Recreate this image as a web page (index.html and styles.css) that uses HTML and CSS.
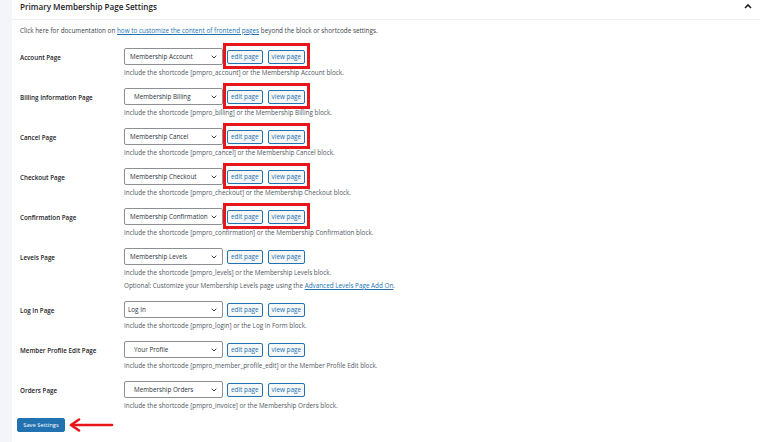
FILE: index.html
```html
<!DOCTYPE html>
<html lang="en">
<head>
<meta charset="utf-8">
<title>Primary Membership Page Settings</title>
<link rel="stylesheet" href="styles.css">
</head>
<body>
<div class="page">
  <div class="panel">
    <div class="panel-head">
      <h2 class="panel-title">Primary Membership Page Settings</h2>
      <svg class="toggle" width="8" height="6" viewBox="0 0 8 6"><polyline points="1,5 4,2 7,5" fill="none" stroke="#1d2327" stroke-width="1.6"/></svg>
    </div>
    <div class="panel-body">
      <p class="intro">Click here for documentation on <a href="#">how to customize the content of frontend pages</a> beyond the block or shortcode settings.</p>
      <div class="rows">
        <div class="row">
          <div class="label">Account Page</div>
          <div class="field">
            <div class="controls">
              <span class="select"><span class="select-value">Membership Account</span><svg class="caret" width="6" height="4" viewBox="0 0 6 4"><polyline points="0.7,0.7 3,3 5.3,0.7" fill="none" stroke="#3c434a" stroke-width="1"/></svg></span>
              <span class="btns hl"><a class="btn" href="#">edit page</a><a class="btn" href="#">view page</a></span>
            </div>
            <p class="desc">Include the shortcode [pmpro_account] or the Membership Account block.</p>
          </div>
        </div>
        <div class="row">
          <div class="label">Billing Information Page</div>
          <div class="field">
            <div class="controls">
              <span class="select"><span class="select-value indent">Membership Billing</span><svg class="caret" width="6" height="4" viewBox="0 0 6 4"><polyline points="0.7,0.7 3,3 5.3,0.7" fill="none" stroke="#3c434a" stroke-width="1"/></svg></span>
              <span class="btns hl"><a class="btn" href="#">edit page</a><a class="btn" href="#">view page</a></span>
            </div>
            <p class="desc">Include the shortcode [pmpro_billing] or the Membership Billing block.</p>
          </div>
        </div>
        <div class="row">
          <div class="label">Cancel Page</div>
          <div class="field">
            <div class="controls">
              <span class="select"><span class="select-value">Membership Cancel</span><svg class="caret" width="6" height="4" viewBox="0 0 6 4"><polyline points="0.7,0.7 3,3 5.3,0.7" fill="none" stroke="#3c434a" stroke-width="1"/></svg></span>
              <span class="btns hl"><a class="btn" href="#">edit page</a><a class="btn" href="#">view page</a></span>
            </div>
            <p class="desc">Include the shortcode [pmpro_cancel] or the Membership Cancel block.</p>
          </div>
        </div>
        <div class="row">
          <div class="label">Checkout Page</div>
          <div class="field">
            <div class="controls">
              <span class="select"><span class="select-value">Membership Checkout</span><svg class="caret" width="6" height="4" viewBox="0 0 6 4"><polyline points="0.7,0.7 3,3 5.3,0.7" fill="none" stroke="#3c434a" stroke-width="1"/></svg></span>
              <span class="btns hl"><a class="btn" href="#">edit page</a><a class="btn" href="#">view page</a></span>
            </div>
            <p class="desc">Include the shortcode [pmpro_checkout] or the Membership Checkout block.</p>
          </div>
        </div>
        <div class="row">
          <div class="label">Confirmation Page</div>
          <div class="field">
            <div class="controls">
              <span class="select"><span class="select-value">Membership Confirmation</span><svg class="caret" width="6" height="4" viewBox="0 0 6 4"><polyline points="0.7,0.7 3,3 5.3,0.7" fill="none" stroke="#3c434a" stroke-width="1"/></svg></span>
              <span class="btns hl"><a class="btn" href="#">edit page</a><a class="btn" href="#">view page</a></span>
            </div>
            <p class="desc">Include the shortcode [pmpro_confirmation] or the Membership Confirmation block.</p>
          </div>
        </div>
        <div class="row">
          <div class="label">Levels Page</div>
          <div class="field">
            <div class="controls">
              <span class="select"><span class="select-value">Membership Levels</span><svg class="caret" width="6" height="4" viewBox="0 0 6 4"><polyline points="0.7,0.7 3,3 5.3,0.7" fill="none" stroke="#3c434a" stroke-width="1"/></svg></span>
              <span class="btns"><a class="btn" href="#">edit page</a><a class="btn" href="#">view page</a></span>
            </div>
            <p class="desc">Include the shortcode [pmpro_levels] or the Membership Levels block.</p>
            <p class="desc">Optional: Customize your Membership Levels page using the <a href="#">Advanced Levels Page Add On</a>.</p>
          </div>
        </div>
        <div class="row">
          <div class="label">Log In Page</div>
          <div class="field">
            <div class="controls">
              <span class="select"><span class="select-value tight">Log In</span><svg class="caret" width="6" height="4" viewBox="0 0 6 4"><polyline points="0.7,0.7 3,3 5.3,0.7" fill="none" stroke="#3c434a" stroke-width="1"/></svg></span>
              <span class="btns"><a class="btn" href="#">edit page</a><a class="btn" href="#">view page</a></span>
            </div>
            <p class="desc">Include the shortcode [pmpro_login] or the Log In Form block.</p>
          </div>
        </div>
        <div class="row">
          <div class="label">Member Profile Edit Page</div>
          <div class="field">
            <div class="controls">
              <span class="select"><span class="select-value indent">Your Profile</span><svg class="caret" width="6" height="4" viewBox="0 0 6 4"><polyline points="0.7,0.7 3,3 5.3,0.7" fill="none" stroke="#3c434a" stroke-width="1"/></svg></span>
              <span class="btns"><a class="btn" href="#">edit page</a><a class="btn" href="#">view page</a></span>
            </div>
            <p class="desc">Include the shortcode [pmpro_member_profile_edit] or the Member Profile Edit block.</p>
          </div>
        </div>
        <div class="row">
          <div class="label">Orders Page</div>
          <div class="field">
            <div class="controls">
              <span class="select"><span class="select-value indent">Membership Orders</span><svg class="caret" width="6" height="4" viewBox="0 0 6 4"><polyline points="0.7,0.7 3,3 5.3,0.7" fill="none" stroke="#3c434a" stroke-width="1"/></svg></span>
              <span class="btns"><a class="btn" href="#">edit page</a><a class="btn" href="#">view page</a></span>
            </div>
            <p class="desc">Include the shortcode [pmpro_invoice] or the Membership Orders block.</p>
          </div>
        </div>
      </div>
      <div class="submit">
        <button class="btn-primary" type="button">Save Settings</button>
        <svg class="arrow" width="46" height="14" viewBox="0 0 46 14"><line x1="6" y1="7" x2="44" y2="7" stroke="#e8161b" stroke-width="2.6" stroke-linecap="round"/><polyline points="11,1.5 3,7 11,12.5" fill="none" stroke="#e8161b" stroke-width="2.6" stroke-linecap="round" stroke-linejoin="round"/></svg>
      </div>
    </div>
  </div>
</div>
</body>
</html>
```

FILE: styles.css
```css
* { box-sizing: border-box; }

html, body {
  margin: 0;
  padding: 0;
}

body {
  background: #f3f5f8;
  font-family: "Open Sans", "Noto Sans", sans-serif;
  font-size: 6.3px;
  color: #3c434a;
}

.page {
  padding-left: 12px;
  min-height: 442px;
}

.panel {
  background: #ffffff;
  min-height: 442px;
}

.panel-head {
  height: 20px;
  border-bottom: 1px solid #eeeff1;
  display: flex;
  justify-content: space-between;
  align-items: flex-start;
  padding: 0 8px 0 8px;
}

.panel-title {
  margin: 0;
  font-size: 8.1px;
  line-height: 14px;
  font-weight: 600;
  color: #1d2327;
}

.toggle {
  margin-top: 3px;
}

.panel-body {
  padding: 0 8px;
}

.intro {
  margin: 6px 0 0 0;
  line-height: 10px;
  font-size: 6.35px;
  color: #3c434a;
}

a {
  color: #2271b1;
}

.rows {
  margin-top: 12px;
}

.row {
  display: grid;
  grid-template-columns: 104px 1fr;
  padding-bottom: 9px;
}

.row:last-child {
  padding-bottom: 0;
}

.label {
  padding-top: 5px;
  line-height: 10px;
  font-size: 6.27px;
  font-weight: 600;
  color: #1d2327;
}

.controls {
  display: flex;
  align-items: center;
  height: 17px;
}

.select {
  width: 99px;
  height: 17px;
  border: 1px solid #8c8f94;
  border-radius: 2px;
  background: #fff;
  display: flex;
  align-items: center;
  justify-content: space-between;
  padding: 0 5px 0 5px;
  margin-right: 4px;
  color: #2c3338;
  font-size: 6.3px;
}

.select-value.indent { padding-left: 4px; }
.select-value.tight { margin-left: -2px; }

.caret { flex: none; }

.btns {
  display: flex;
  gap: 5px;
  position: relative;
}

.btns.hl::after {
  content: "";
  position: absolute;
  left: -4px;
  right: -5px;
  top: -7px;
  bottom: -5px;
  border: 3px solid #e8161b;
}

.btn {
  display: inline-flex;
  align-items: center;
  justify-content: center;
  height: 14px;
  padding: 0 3px;
  border: 1px solid #2271b1;
  border-radius: 2px;
  background: #f6f7f7;
  color: #2271b1;
  font-size: 6.4px;
  text-decoration: none;
  white-space: nowrap;
}

.desc {
  margin: 1px 0 0 0;
  line-height: 13px;
  font-size: 6.35px;
  color: #50575e;
}

.desc + .desc {
  margin-top: 0;
}

.submit {
  padding-top: 6px;
  display: flex;
  align-items: center;
  margin-left: -3px;
}

.btn-primary {
  height: 14px;
  width: 48px;
  padding: 0;
  border: 1px solid #2271b1;
  border-radius: 2px;
  background: #2271b1;
  color: #fff;
  font-family: "Open Sans", "Noto Sans", sans-serif;
  font-size: 5.8px;
}

.arrow {
  margin-left: 3px;
}
```
